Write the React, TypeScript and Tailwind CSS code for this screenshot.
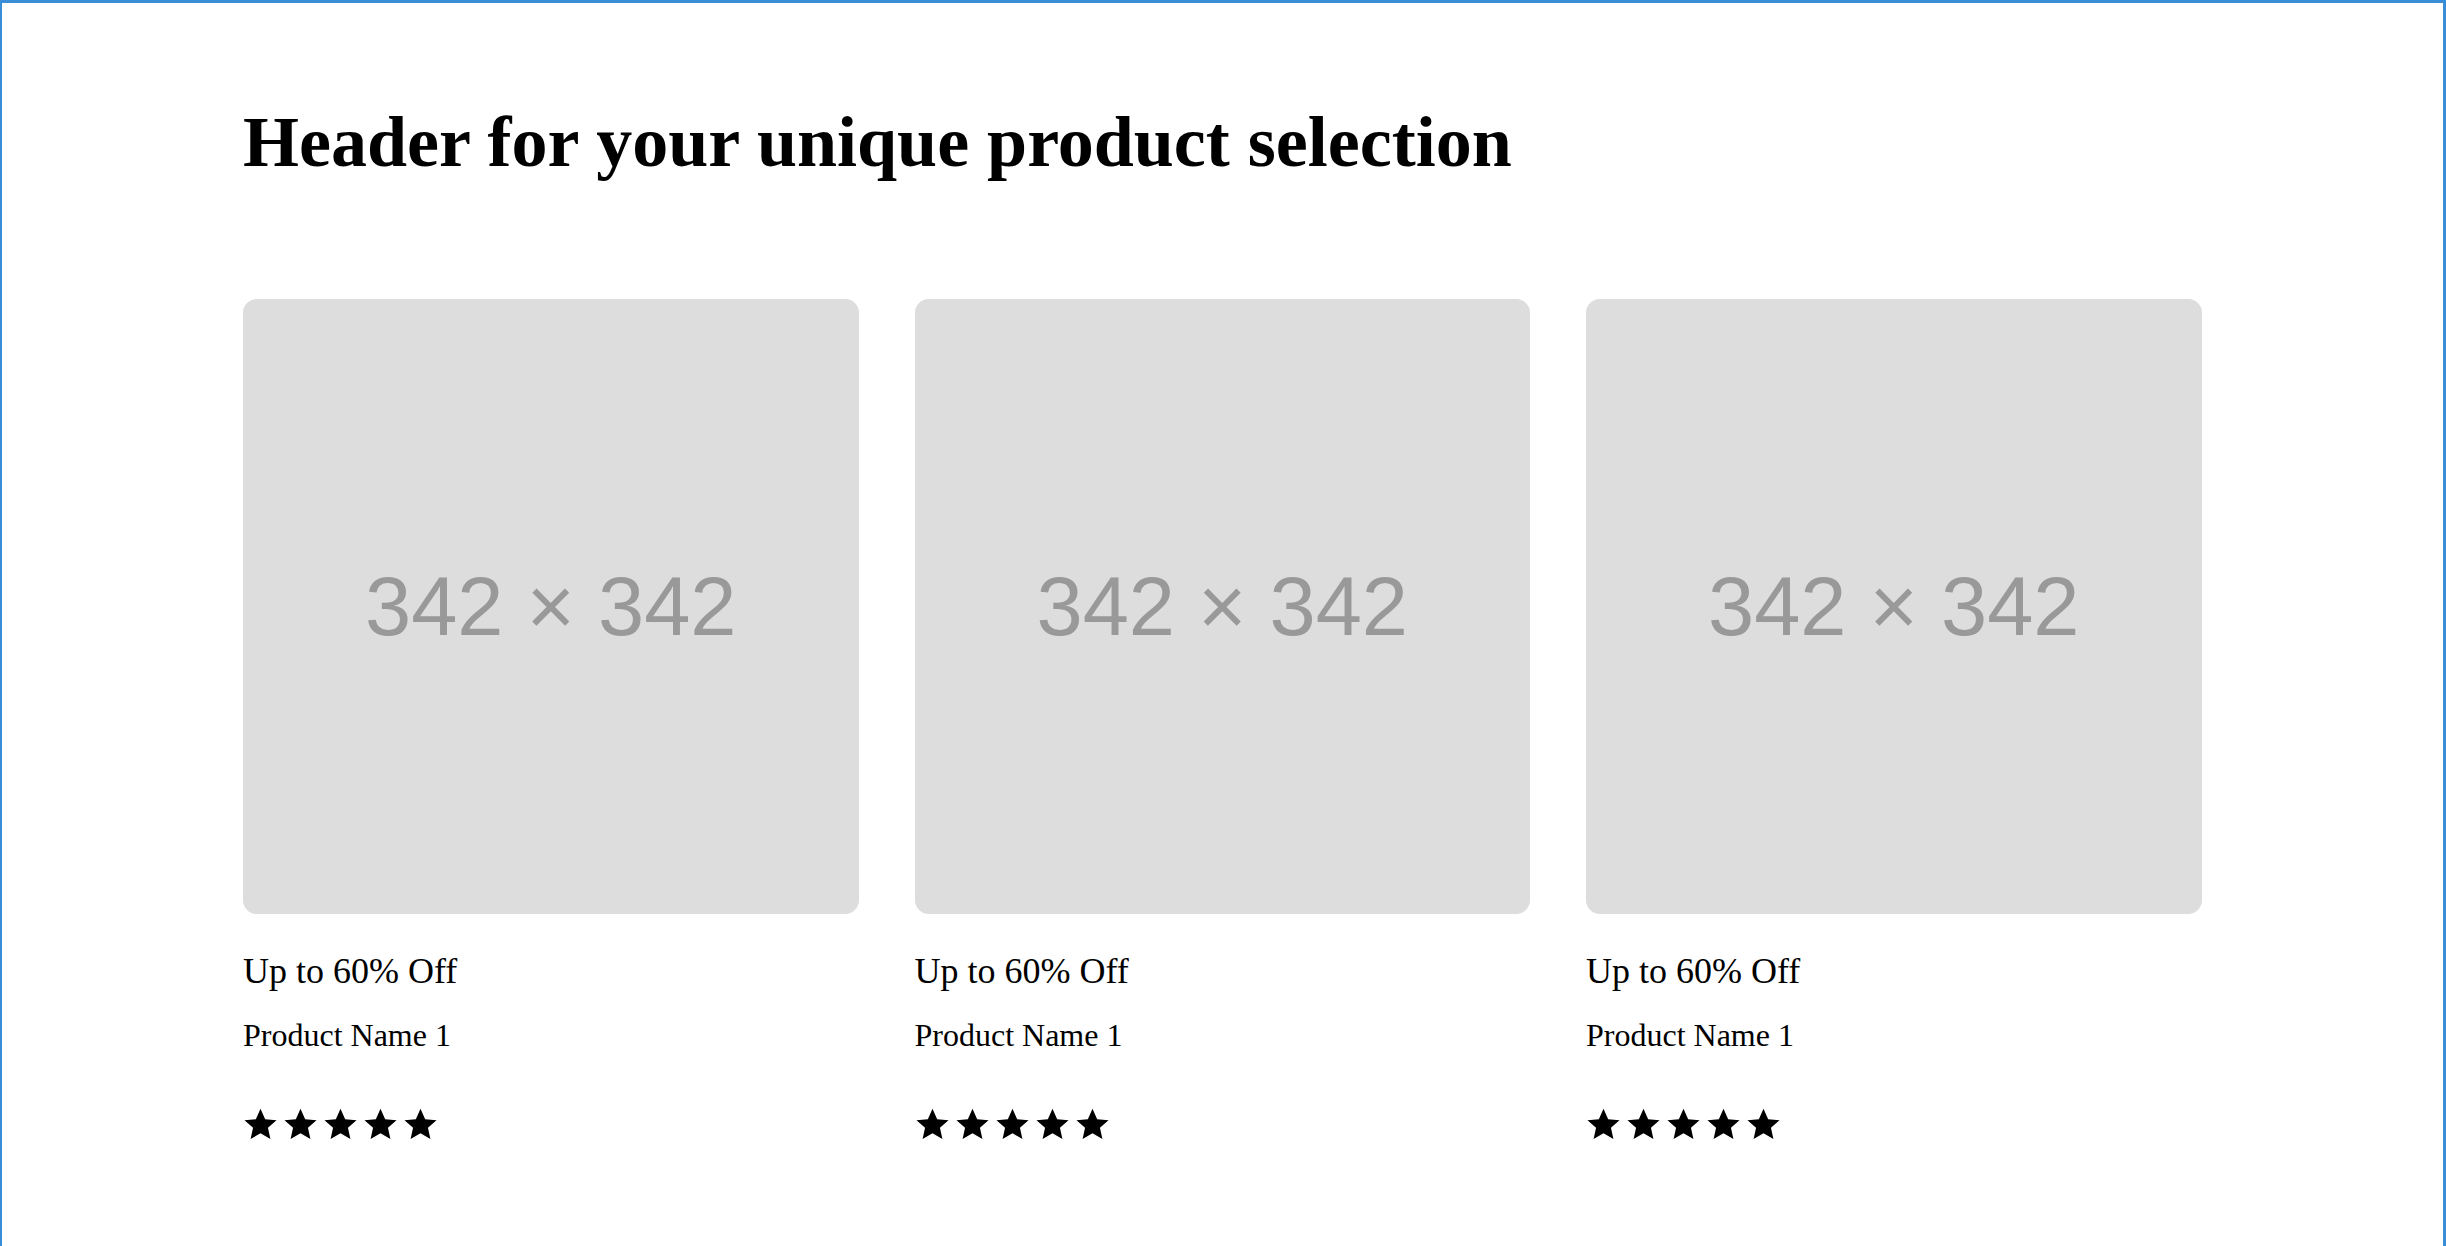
import React from 'react'

const products = [
  { id: 1, deal: 'Up to 60% Off', name: 'Product Name 1', rating: 5 },
  { id: 2, deal: 'Up to 60% Off', name: 'Product Name 1', rating: 5 },
  { id: 3, deal: 'Up to 60% Off', name: 'Product Name 1', rating: 5 },
]

function Star() {
  return (
    <svg viewBox="0 0 24 24" className="w-[35px] h-[35px]" aria-hidden="true">
      <polygon
        points="12,1.2 15.2,8.4 23,9.1 17.1,14.3 18.8,22 12,18 5.2,22 6.9,14.3 1,9.1 8.8,8.4"
        fill="#000"
      />
    </svg>
  )
}

function ProductCard({ deal, name, rating }: { deal: string; name: string; rating: number }) {
  return (
    <div className="flex flex-col">
      <div className="w-[615.5px] h-[615px] rounded-[14px] bg-[#dddddd] flex items-center justify-center">
        <span className="text-[83px] leading-none text-[#999999] font-['Liberation_Sans',Arial,sans-serif]">
          342 × 342
        </span>
      </div>
      <p className="mt-[37px] text-[36px] leading-[40px]">{deal}</p>
      <p className="mt-[26px] text-[32px] leading-[36px]">{name}</p>
      <div className="mt-[54px] flex gap-[5px]">
        {Array.from({ length: rating }).map((_, i) => (
          <Star key={i} />
        ))}
      </div>
    </div>
  )
}

export default function App() {
  return (
    <div className="h-[1246px] bg-white border-t-[3px] border-l-2 border-r-[3px] border-[#3a8ed8] overflow-hidden text-black font-['Liberation_Serif','Times_New_Roman',serif]">
      <div className="pl-[241px] pt-[99px]">
        <h1 className="text-[72px] leading-[80px] font-bold">Header for your unique product selection</h1>
        <div className="mt-[117px] flex gap-[56px]">
          {products.map((p) => (
            <ProductCard key={p.id} deal={p.deal} name={p.name} rating={p.rating} />
          ))}
        </div>
      </div>
    </div>
  )
}
